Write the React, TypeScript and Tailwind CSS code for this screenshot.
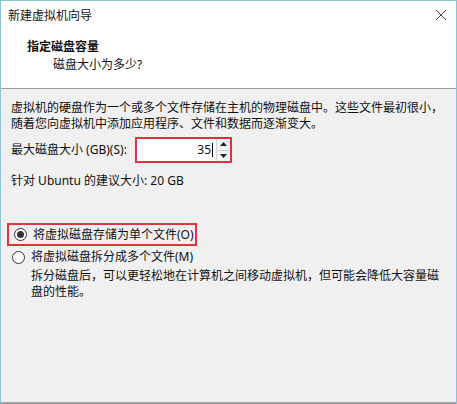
import React from "react";

const font = {
  fontFamily: '"Noto Sans", "Noto Sans CJK SC", sans-serif',
};

function Radio({ checked }: { checked?: boolean }) {
  return (
    <span className="flex h-[13px] w-[13px] items-center justify-center rounded-full border border-[#333] bg-white">
      {checked && <span className="h-[7px] w-[7px] rounded-full bg-[#333]" />}
    </span>
  );
}

export default function App() {
  return (
    <div
      className="flex h-[404px] w-[457px] flex-col border-x border-t border-[#8cc3d6] bg-white text-[12px] leading-[16px] text-[#111]"
      style={font}
    >
      {/* title bar */}
      <div className="flex h-[29px] items-center justify-between pl-[7px] pr-[9px]">
        <span>新建虚拟机向导</span>
        <svg width="12" height="12" viewBox="0 0 12 12" className="mb-[2px]">
          <path d="M1 1L11 11M11 1L1 11" stroke="#444" strokeWidth="1" />
        </svg>
      </div>

      {/* header */}
      <div className="flex h-[59px] flex-col border-b border-[#a0a0a0] pl-[26px] pt-[9px]">
        <span className="font-bold">指定磁盘容量</span>
        <span className="mt-[2px] pl-[26px]">磁盘大小为多少?</span>
      </div>

      {/* body */}
      <div className="flex flex-1 flex-col border-b-2 border-[#a0a0a0] bg-[#f0f0f0] pl-[10px] pt-[11px]">
        <p>
          虚拟机的硬盘作为一个或多个文件存储在主机的物理磁盘中。这些文件最初很小，
          <br />
          随着您向虚拟机中添加应用程序、文件和数据而逐渐变大。
        </p>

        <div className="mt-[5px] flex items-center">
          <span className="w-[124px]">最大磁盘大小 (GB)(S):</span>
          <div className="flex h-[26px] w-[97px] border-2 border-[#e0343c] bg-white">
            <div className="flex flex-1 items-center justify-end pr-[3px]">
              <span>35</span>
              <span className="ml-[1px] h-[14px] w-px bg-black" />
            </div>
            <div className="flex w-[14px] flex-col border-l border-[#d6d6d6] bg-[#f4f4f4]">
              <div className="flex flex-1 items-center justify-center border-b border-[#d6d6d6]">
                <svg width="7" height="4" viewBox="0 0 7 4">
                  <path d="M0 4L3.5 0L7 4Z" fill="#222" />
                </svg>
              </div>
              <div className="flex flex-1 items-center justify-center">
                <svg width="7" height="4" viewBox="0 0 7 4">
                  <path d="M0 0L3.5 4L7 0Z" fill="#222" />
                </svg>
              </div>
            </div>
          </div>
        </div>

        <p className="mt-[10px]">针对 Ubuntu 的建议大小: 20 GB</p>

        <div className="mt-[34px] ml-[-4px] flex h-[23px] w-[190px] items-center gap-[6px] border-2 border-[#e0343c] pl-[5px]">
          <Radio checked />
          <span>将虚拟磁盘存储为单个文件(O)</span>
        </div>

        <div className="mt-[3px] flex items-center gap-[6px] pl-[1px]">
          <Radio />
          <span>将虚拟磁盘拆分成多个文件(M)</span>
        </div>

        <p className="mt-[3px] pl-[20px]">
          拆分磁盘后，可以更轻松地在计算机之间移动虚拟机，但可能会降低大容量磁
          <br />
          盘的性能。
        </p>
      </div>
    </div>
  );
}
